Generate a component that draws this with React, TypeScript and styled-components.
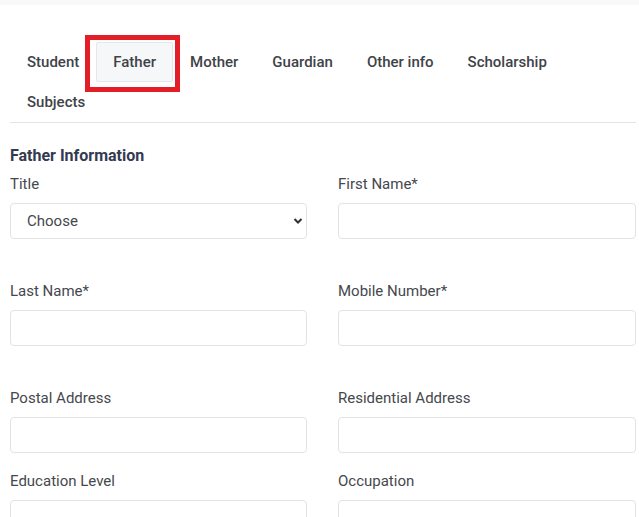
import React from "react";
import styled, { createGlobalStyle } from "styled-components";

const GlobalStyle = createGlobalStyle`
  html, body {
    margin: 0;
    padding: 0;
    background: #ffffff;
    font-family: Roboto, "Liberation Sans", Arial, sans-serif;
  }
  * { box-sizing: border-box; }
`;

const Page = styled.div`
  width: 639px;
  height: 517px;
  overflow: hidden;
  background: #ffffff;
`;

const TopBand = styled.div`
  height: 5px;
  background: #f9f9fa;
`;

const Content = styled.div`
  padding: 37px 3px 0 10px;
`;

const Tabs = styled.ul`
  display: flex;
  flex-wrap: wrap;
  list-style: none;
  margin: 0;
  padding: 0;
  border-bottom: 1px solid #e3e4e6;
`;

const TabItem = styled.li`
  position: relative;
`;

const TabLink = styled.div<{ $active?: boolean }>`
  height: 40px;
  padding: 7px 16px 8px;
  font-size: 15px;
  line-height: 24px;
  font-weight: 500;
  color: #404348;
  background: ${(p) => (p.$active ? "#f6f7f9" : "transparent")};
  border: 1px solid ${(p) => (p.$active ? "#e4e6ea" : "transparent")};
  border-radius: 2px;
  white-space: nowrap;
`;

const Annotation = styled.span`
  position: absolute;
  left: -11px;
  top: -7px;
  width: 95px;
  height: 57px;
  border: 5px solid #e41e26;
  pointer-events: none;
`;

const Heading = styled.h5`
  margin: 21px 0 4px;
  font-size: 16px;
  line-height: 24px;
  font-weight: 700;
  color: #343a52;
`;

const FormGrid = styled.div`
  display: grid;
  grid-template-columns: 297px 1fr;
  column-gap: 31px;
`;

const Field = styled.div`
  display: flex;
  flex-direction: column;
  margin-bottom: 16px;
`;

const Label = styled.label`
  font-size: 15px;
  line-height: 24px;
  font-weight: 400;
  color: #45484d;
  margin-bottom: 7px;
`;

const Input = styled.input`
  height: 36px;
  width: 100%;
  border: 1px solid #e2e3e5;
  border-radius: 4px;
  background: #ffffff;
  padding: 0 16px;
  font-family: inherit;
  font-size: 15px;
  color: #45484d;
  outline: none;
`;

const SelectWrap = styled.div`
  position: relative;
  width: 100%;
`;

const Select = styled.select`
  appearance: none;
  -webkit-appearance: none;
  height: 36px;
  width: 100%;
  border: 1px solid #e2e3e5;
  border-radius: 4px;
  background: #ffffff;
  padding: 0 16px;
  font-family: inherit;
  font-size: 15px;
  color: #45484d;
  outline: none;
`;

const Chevron = styled.svg`
  position: absolute;
  right: 4px;
  top: 14px;
  width: 10px;
  height: 8px;
  pointer-events: none;
`;

const ErrorSlot = styled.div`
  height: 24px;
`;

type FieldDef = { label: string; required?: boolean; select?: boolean };

const fields: FieldDef[] = [
  { label: "Title", select: true },
  { label: "First Name*", required: true },
  { label: "Last Name*", required: true },
  { label: "Mobile Number*", required: true },
  { label: "Postal Address" },
  { label: "Residential Address" },
  { label: "Education Level" },
  { label: "Occupation" },
];

const tabs = ["Student", "Father", "Mother", "Guardian", "Other info", "Scholarship", "Subjects"];

export default function App() {
  return (
    <Page>
      <GlobalStyle />
      <TopBand />
      <Content>
        <Tabs>
          {tabs.map((t) => (
            <TabItem key={t}>
              <TabLink $active={t === "Father"}>{t}</TabLink>
              {t === "Father" && <Annotation />}
            </TabItem>
          ))}
        </Tabs>
        <Heading>Father Information</Heading>
        <FormGrid>
          {fields.map((f) => (
            <Field key={f.label}>
              <Label>{f.label}</Label>
              {f.select ? (
                <SelectWrap>
                  <Select defaultValue="">
                    <option value="">Choose</option>
                    <option value="Mr">Mr</option>
                    <option value="Dr">Dr</option>
                  </Select>
                  <Chevron viewBox="0 0 10 8">
                    <path d="M1.5 2 L5 5.5 L8.5 2" fill="none" stroke="#2f3134" strokeWidth="2" />
                  </Chevron>
                </SelectWrap>
              ) : (
                <Input type="text" />
              )}
              {f.required && <ErrorSlot />}
            </Field>
          ))}
        </FormGrid>
      </Content>
    </Page>
  );
}
